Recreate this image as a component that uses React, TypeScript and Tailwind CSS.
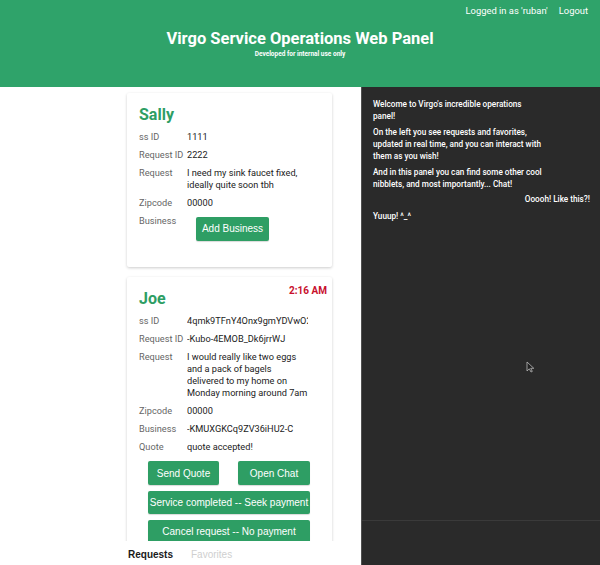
import React from 'react';

const roboto = { fontFamily: 'Roboto, "Liberation Sans", sans-serif' };

type Row = { label: string; value?: string; lines?: string[]; node?: React.ReactNode };

function InfoRow({ label, value, lines, node }: Row) {
  return (
    <div className="flex mt-[6px] first:mt-0 text-[9.2px] leading-[12px]">
      <div className="w-[48px] shrink-0 text-[#666]">{label}</div>
      {node ? (
        node
      ) : (
        <div className="w-[121px] overflow-hidden whitespace-nowrap text-[#222]">
          {lines ? lines.map((l) => <div key={l}>{l}</div>) : value}
        </div>
      )}
    </div>
  );
}

function GreenButton({ children, className }: { children: React.ReactNode; className?: string }) {
  return (
    <button
      className={`h-[23px] bg-[#2e9e64] text-white text-[10px] rounded-[2px] shadow-[0_1px_1px_rgba(0,0,0,0.15)] font-['Liberation_Sans',Arial,sans-serif] ${className ?? ''}`}
    >
      {children}
    </button>
  );
}

function Msg({ lines, right }: { lines: string[]; right?: boolean }) {
  return (
    <div className={`whitespace-nowrap ${right ? 'text-right' : ''}`}>
      {lines.map((l) => (
        <div key={l}>{l}</div>
      ))}
    </div>
  );
}

export default function App() {
  return (
    <div className="w-[600px] h-[565px] flex flex-col overflow-hidden bg-white" style={roboto}>
      <header className="h-[87px] shrink-0 bg-[#2fa36a] text-white">
        <div className="flex justify-end gap-[11px] pr-[12px] pt-[4px] text-[9.4px] leading-[14px]">
          <span>Logged in as 'ruban'</span>
          <span>Logout</span>
        </div>
        <div className="text-center mt-[11px]">
          <div className="text-[16.5px] font-bold leading-[20px]">Virgo Service Operations Web Panel</div>
          <div className="text-[6.5px] font-bold leading-[10px]">Developed for internal use only</div>
        </div>
      </header>

      <div className="flex flex-1 min-h-0">
        <div className="w-[361px] shrink-0 flex flex-col">
          <div className="flex-1 min-h-0 overflow-hidden pl-[127px] pt-[6px]">
            <div className="w-[205px] bg-white rounded-[2px] shadow-[0_1px_3px_rgba(0,0,0,0.2)] px-[12px] pt-[12px] pb-[26px]">
              <div className="text-[16px] font-bold leading-[20px] text-[#2e9e64] mb-[5px]">Sally</div>
              <InfoRow label="ss ID" value="1111" />
              <InfoRow label="Request ID" value="2222" />
              <InfoRow label="Request" lines={['I need my sink faucet fixed,', 'ideally quite soon tbh']} />
              <InfoRow label="Zipcode" value="00000" />
              <InfoRow
                label="Business"
                node={
                  <GreenButton className="ml-[9px] mt-[2px] w-[73px] h-[24px]">Add Business</GreenButton>
                }
              />
            </div>

            <div className="relative w-[205px] mt-[10px] bg-white rounded-[2px] shadow-[0_1px_3px_rgba(0,0,0,0.2)] px-[12px] pt-[12px] pb-[12px]">
              <div className="absolute top-[7px] right-[5px] text-[10px] font-bold text-[#c8102e] leading-[14px]">2:16 AM</div>
              <div className="text-[16px] font-bold leading-[20px] text-[#2e9e64] mb-[5px]">Joe</div>
              <InfoRow label="ss ID" value="4qmk9TFnY4Onx9gmYDVwO2aQ" />
              <InfoRow label="Request ID" value="-Kubo-4EMOB_Dk6jrrWJ" />
              <InfoRow
                label="Request"
                lines={[
                  'I would really like two eggs',
                  'and a pack of bagels',
                  'delivered to my home on',
                  'Monday morning around 7am',
                ]}
              />
              <InfoRow label="Zipcode" value="00000" />
              <InfoRow label="Business" value="-KMUXGKCq9ZV36iHU2-C" />
              <InfoRow label="Quote" value="quote accepted!" />
              <div className="w-[162px] ml-[9px] mt-[8px] flex flex-col gap-[6px]">
                <div className="flex justify-between">
                  <GreenButton className="w-[71px] h-[24px]">Send Quote</GreenButton>
                  <GreenButton className="w-[72px] h-[24px]">Open Chat</GreenButton>
                </div>
                <GreenButton className="w-full">Service completed -- Seek payment</GreenButton>
                <GreenButton className="w-full">Cancel request -- No payment</GreenButton>
              </div>
            </div>
          </div>
          <div className="h-[24px] shrink-0 bg-white flex items-center pt-[3px] pl-[128px] gap-[18px] text-[10px] font-['Liberation_Sans',Arial,sans-serif]">
            <span className="text-[#1a1a1a] font-bold">Requests</span>
            <span className="text-[#cfcfcf]">Favorites</span>
          </div>
        </div>

        <div className="relative flex-1 flex flex-col bg-[#2a2a2a] border-l border-[#505050] text-white font-['Roboto','Liberation_Sans',sans-serif] text-[8.2px] font-medium leading-[12px]">
          <div className="flex-1 pl-[11px] pr-[10px] pt-[11px] flex flex-col gap-[4px]">
            <Msg lines={["Welcome to Virgo's incredible operations", 'panel!']} />
            <Msg
              lines={[
                'On the left you see requests and favorites,',
                'updated in real time, and you can interact with',
                'them as you wish!',
              ]}
            />
            <Msg lines={['And in this panel you can find some other cool', 'nibblets, and most importantly... Chat!']} />
            <div className="-mt-[1px]">
              <Msg right lines={['Ooooh! Like this?!']} />
            </div>
            <div className="mt-[1px]">
              <Msg lines={['Yuuup! ^_^']} />
            </div>
          </div>
          <div className="h-[45px] shrink-0 border-t border-[#3a3a3a]" />
          <svg className="absolute left-[164px] top-[274px]" width="9" height="12" viewBox="0 0 9 12">
            <path d="M1 1 L1 10 L3.3 7.8 L5 11 L6.3 10.4 L4.7 7.3 L7.8 7.3 Z" fill="#222" stroke="#bbb" strokeWidth="0.8" />
          </svg>
        </div>
      </div>
    </div>
  );
}
